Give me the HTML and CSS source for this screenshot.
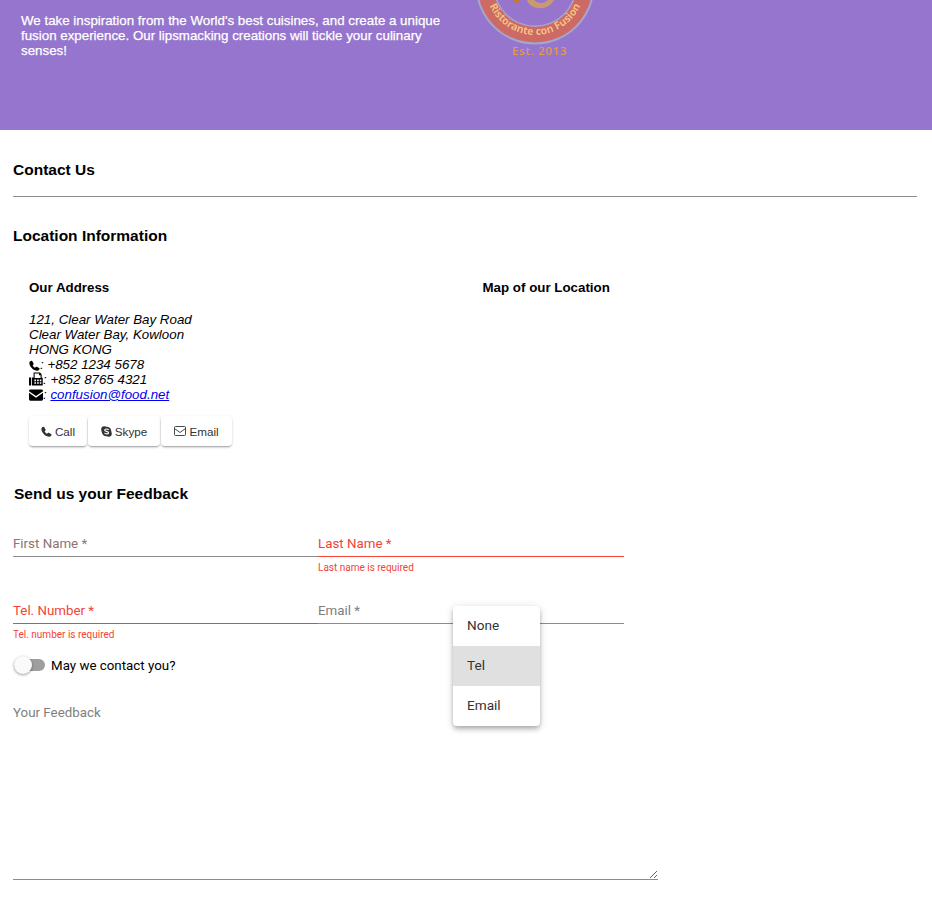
FILE: index.html
```html
<!DOCTYPE html>
<html lang="en">
<head>
    <meta charset="UTF-8">
    <meta name="viewport" content="width=device-width, initial-scale=1.0">
    <title>Contact Us</title>
    <link rel="stylesheet" href="styles.css">
</head>
<body>
    <header class="jumbotron">
        <p class="jumbotron-text">We take inspiration from the World's best cuisines, and create a unique fusion experience. Our lipsmacking creations will tickle your culinary senses!</p>
        <svg class="logo" width="130" height="60" viewBox="0 0 130 60">
            <defs>
                <path id="logo-arc" d="M16.700 -2.100 A 50 50 0 0 0 113.300 -2.100"></path>
            </defs>
            <circle cx="65" cy="-15" r="59.500" fill="#a3a8cf"></circle>
            <circle cx="65" cy="-15" r="57.500" fill="#cd6a66"></circle>
            <circle cx="65" cy="-15" r="42" fill="#a3a8cf"></circle>
            <circle cx="65" cy="-15" r="40.500" fill="#9775cd"></circle>
            <path d="M43 0 C44 3 47 4 50 0 Z" fill="#c77a22"></path>
            <path d="M57 0 C59 6 66 9 73 8 C78 7 82 4 84 0 L78 0 C74 4 68 4 64 0 Z" fill="#c99a72"></path>
            <text class="logo-arc-text"><textPath href="#logo-arc" startOffset="50%" text-anchor="middle">Ristorante con Fusion</textPath></text>
            <text class="logo-est" x="70" y="55" text-anchor="middle">Est. 2013</text>
        </svg>
    </header>

    <main class="content">
        <h3 class="page-title">Contact Us</h3>
        <hr class="divider">
        <h3 class="section-title">Location Information</h3>

        <div class="location">
            <div class="address-col">
                <h4 class="sub-title">Our Address</h4>
                <address class="address">
                    121, Clear Water Bay Road<br>
                    Clear Water Bay, Kowloon<br>
                    HONG KONG<br>
                    <svg class="addr-icon" width="11" height="11" viewBox="0 0 24 24"><path d="M6.600 1.500 L10 7.800 C10.400 8.500 10.200 9.200 9.700 9.700 L8 11.400 C9.200 14 10.500 15.500 13 16.800 L14.900 15 C15.500 14.400 16.200 14.300 16.900 14.700 L23 18 C23.400 20 21.500 23 18.500 23.500 C9 23.500 0.500 14 0.800 5.500 C1.200 3.400 3.800 1.200 6.600 1.500 Z"></path></svg>: +852 1234 5678<br>
                    <svg class="addr-icon" width="14" height="14" viewBox="0 0 26 26"><path d="M0 10 h4 v15 h-4 Z M5.500 10 h3 v-9 h12 l3 3 v6 a2 2 0 0 1 2 2 v13 h-20 Z M10.500 3 v8 h11 v-5 h-3 v-3 Z M10 14 v3 h3 v-3 Z M15 14 v3 h3 v-3 Z M20 14 v3 h3 v-3 Z M10 19 v3 h3 v-3 Z M15 19 v3 h3 v-3 Z M20 19 v3 h3 v-3 Z" fill-rule="evenodd"></path></svg>: +852 8765 4321<br>
                    <svg class="addr-icon" width="14" height="12" viewBox="0 0 26 22"><path d="M0 3 a2.500 2.500 0 0 1 2.500 -2 h21 a2.500 2.500 0 0 1 2.500 2 v1 L13 13 L0 4 Z M0 7 L13 16 L26 7 V19 a2.500 2.500 0 0 1 -2.500 2.500 h-21 A2.500 2.500 0 0 1 0 19 Z"></path></svg>: <a class="mail-link" href="#">confusion@food.net</a>
                </address>
                <div class="btn-group">
                    <button type="button" class="contact-btn call-btn">
                        <svg width="11" height="11" viewBox="0 0 24 24" fill="#333"><path d="M6.600 1.500 L10 7.800 C10.400 8.500 10.200 9.200 9.700 9.700 L8 11.400 C9.200 14 10.500 15.500 13 16.800 L14.900 15 C15.500 14.400 16.200 14.300 16.900 14.700 L23 18 C23.400 20 21.500 23 18.500 23.500 C9 23.500 0.500 14 0.800 5.500 C1.200 3.400 3.800 1.200 6.600 1.500 Z"></path></svg>
                        Call
                    </button>
                    <button type="button" class="contact-btn skype-btn">
                        <svg width="11" height="11" viewBox="0 0 24 24"><circle cx="7" cy="7" r="6.500" fill="#333"></circle><circle cx="17" cy="17" r="6.500" fill="#333"></circle><circle cx="12" cy="12" r="10.500" fill="#333"></circle><path d="M16.500 8.500 C15 6 8 6 8 9 C8 12.500 16.500 11 16.500 15 C16.500 18 9 18 7.500 15" fill="none" stroke="#fff" stroke-width="2.400"></path></svg>
                        Skype
                    </button>
                    <button type="button" class="contact-btn email-btn">
                        <svg width="12" height="10" viewBox="0 0 24 20" fill="none" stroke="#333" stroke-width="1.800"><rect x="1" y="1" width="22" height="18" rx="2"></rect><path d="M1 5 L12 13 L23 5"></path></svg>
                        Email
                    </button>
                </div>
            </div>
            <div class="map-col">
                <h4 class="sub-title">Map of our Location</h4>
            </div>
        </div>

        <h3 class="feedback-title">Send us your Feedback</h3>

        <form class="feedback-form">
            <div class="form-row">
                <div class="field">
                    <label class="field-label muted-red">First Name *</label>
                </div>
                <div class="field invalid">
                    <label class="field-label">Last Name *</label>
                    <div class="field-error">Last name is required</div>
                </div>
            </div>
            <div class="form-row second-row">
                <div class="field invalid">
                    <label class="field-label">Tel. Number *</label>
                    <div class="field-error">Tel. number is required</div>
                </div>
                <div class="field">
                    <label class="field-label">Email *</label>
                </div>
                <ul class="select-panel">
                    <li class="select-option">None</li>
                    <li class="select-option active">Tel</li>
                    <li class="select-option">Email</li>
                </ul>
            </div>
            <div class="toggle-row">
                <span class="toggle"><span class="toggle-thumb"></span></span>
                <span class="toggle-label">May we contact you?</span>
            </div>
            <div class="feedback-field">
                <label class="field-label" for="feedback">Your Feedback</label>
                <textarea class="feedback-input" id="feedback"></textarea>
            </div>
        </form>
    </main>
</body>
</html>
```

FILE: styles.css
```css
* {
    box-sizing: border-box;
}
body {
    margin: 0;
    background-color: #fff;
    color: #000;
    font-family: 'Liberation Sans', Arial, sans-serif;
    height: 901px;
    overflow: hidden;
}
.jumbotron {
    display: flex;
    height: 130px;
    padding-left: 21px;
    background-color: #9575cd;
}
.jumbotron-text {
    width: 440px;
    margin: 13px 0 0;
    color: #fff;
    font-size: 13.330px;
    font-weight: 500;
    line-height: 15px;
    -webkit-text-stroke: 0.25px #fff;
}
.logo {
    display: block;
    margin-left: 9px;
    filter: blur(0.4px);
}
.logo-arc-text {
    fill: #f3c27e;
    font-family: 'Open Sans', sans-serif;
    font-size: 10.500px;
    font-weight: 700;
}
.logo-est {
    fill: #e89c40;
    font-family: 'Open Sans', sans-serif;
    font-size: 11.500px;
    font-weight: 600;
    letter-spacing: 0.7px;
}
.content {
    padding: 0 15px 0 13px;
}
.page-title, .section-title, .feedback-title {
    margin: 0;
    font-size: 15.500px;
    line-height: 18px;
    font-weight: 700;
}
.page-title {
    padding-top: 31px;
}
.divider {
    height: 1px;
    margin: 17px 0 0;
    border: none;
    background-color: #8c8c8c;
}
.section-title {
    margin-top: 30px;
}
.location {
    display: flex;
    padding: 0 0 0 16px;
    margin-top: 35px;
}
.address-col {
    width: 453.500px;
}
.sub-title {
    margin: 0;
    font-size: 13.330px;
    line-height: 16px;
    font-weight: 700;
}
.address {
    margin-top: 16px;
    font-size: 13.330px;
    font-style: italic;
    line-height: 15px;
}
.addr-icon {
    vertical-align: -2px;
}
.mail-link {
    color: #00e;
}
.btn-group {
    display: flex;
    gap: 1px;
    margin-top: 14px;
}
.contact-btn {
    display: flex;
    align-items: center;
    justify-content: center;
    gap: 3px;
    height: 30px;
    padding: 0;
    border: none;
    border-radius: 4px;
    background-color: #fff;
    color: #333;
    font-family: 'Liberation Sans', Arial, sans-serif;
    font-size: 11.700px;
    box-shadow: 0 2px 2px -1px rgba(0, 0, 0, 0.3), 0 1px 3px 0 rgba(0, 0, 0, 0.15);
}
.call-btn {
    width: 58px;
}
.skype-btn {
    width: 72px;
}
.email-btn {
    width: 71px;
}
.feedback-title {
    margin-top: 39px;
    margin-left: 1px;
}
.feedback-form {
    width: 645px;
    margin-top: 21px;
}
.form-row {
    position: relative;
    display: grid;
    grid-template-columns: 305px 306px;
}
.second-row {
    margin-top: 8px;
}
.field {
    height: 59px;
}
.field-label {
    display: block;
    height: 33px;
    padding-top: 12px;
    border-bottom: 1px solid #8c8c8c;
    color: #808080;
    font-family: Roboto, sans-serif;
    font-size: 13.330px;
    line-height: 16px;
}
.field-label.muted-red {
    color: #8d7472;
}
.invalid .field-label {
    border-bottom: 1px solid #f44336;
    color: #f44336;
}
.field-error {
    margin-top: 5px;
    color: #f44336;
    font-family: Roboto, sans-serif;
    font-size: 10px;
    line-height: 12px;
}
.select-panel {
    position: absolute;
    top: 15px;
    left: 440px;
    width: 87px;
    margin: 0;
    padding: 0;
    list-style: none;
    border-radius: 4px;
    overflow: hidden;
    background-color: #fff;
    box-shadow: 0 2px 4px -1px rgba(0, 0, 0, 0.2), 0 4px 5px 0 rgba(0, 0, 0, 0.14), 0 1px 10px 0 rgba(0, 0, 0, 0.12);
}
.select-option {
    height: 40px;
    padding-left: 14px;
    color: #333;
    font-family: Roboto, sans-serif;
    font-size: 13.600px;
    line-height: 38px;
}
.select-option.active {
    background-color: #e0e0e0;
}
.toggle-row {
    display: flex;
    align-items: center;
    gap: 6px;
    height: 20px;
    margin-top: 5px;
    padding-left: 1px;
}
.toggle {
    position: relative;
    width: 31px;
    height: 12px;
    border-radius: 6px;
    background-color: #9e9e9e;
}
.toggle-thumb {
    position: absolute;
    top: -3px;
    left: 0;
    width: 18px;
    height: 18px;
    border-radius: 50%;
    background-color: #fafafa;
    box-shadow: 0 1px 3px rgba(0, 0, 0, 0.4);
}
.toggle-label {
    font-family: Roboto, sans-serif;
    font-size: 13.330px;
}
.feedback-field {
    margin-top: 30px;
}
.feedback-field .field-label {
    height: auto;
    padding-top: 0;
    border-bottom: none;
}
.feedback-input {
    display: block;
    width: 645px;
    height: 159px;
    border: none;
    border-bottom: 1px solid #8c8c8c;
    outline: none;
    background: transparent;
}
```
